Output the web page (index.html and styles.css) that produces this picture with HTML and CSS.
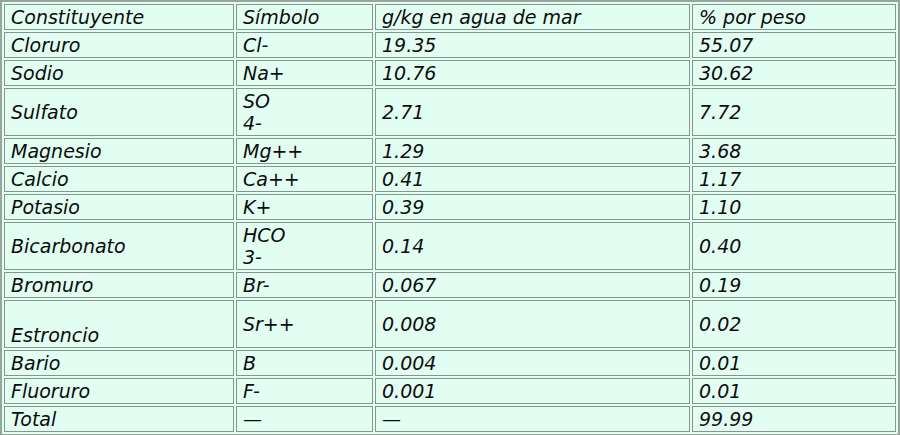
FILE: index.html
```html
<!DOCTYPE html>
<html lang="es">
<head>
<meta charset="utf-8">
<title>Constituyentes del agua de mar</title>
<link rel="stylesheet" href="styles.css">
</head>
<body>
<table class="data">
  <colgroup>
    <col class="c1"><col class="c2"><col class="c3"><col class="c4">
  </colgroup>
  <tr><td>Constituyente</td><td>Símbolo</td><td>g/kg en agua de mar</td><td>% por peso</td></tr>
  <tr><td>Cloruro</td><td>Cl-</td><td>19.35</td><td>55.07</td></tr>
  <tr><td>Sodio</td><td>Na+</td><td>10.76</td><td>30.62</td></tr>
  <tr><td>Sulfato</td><td>SO<br>4-</td><td>2.71</td><td>7.72</td></tr>
  <tr><td>Magnesio</td><td>Mg++</td><td>1.29</td><td>3.68</td></tr>
  <tr><td>Calcio</td><td>Ca++</td><td>0.41</td><td>1.17</td></tr>
  <tr><td>Potasio</td><td>K+</td><td>0.39</td><td>1.10</td></tr>
  <tr><td>Bicarbonato</td><td>HCO<br>3-</td><td>0.14</td><td>0.40</td></tr>
  <tr><td>Bromuro</td><td>Br-</td><td>0.067</td><td>0.19</td></tr>
  <tr><td><br>Estroncio</td><td>Sr++</td><td>0.008</td><td>0.02</td></tr>
  <tr><td>Bario</td><td>B</td><td>0.004</td><td>0.01</td></tr>
  <tr><td>Fluoruro</td><td>F-</td><td>0.001</td><td>0.01</td></tr>
  <tr><td>Total</td><td>—</td><td>—</td><td>99.99</td></tr>
</table>
</body>
</html>
```
FILE: styles.css
```css
html, body {
  margin: 0;
  padding: 0;
  background: #e2fdf1;
}

.data {
  width: 900px;
  table-layout: fixed;
  border-collapse: separate;
  border-spacing: 2px;
  border: 2px solid #96a49d;
  background: #e2fdf1;
  font-family: "DejaVu Sans", Verdana, sans-serif;
  font-style: italic;
  font-size: 19px;
  line-height: 22px;
  color: #0c0c0c;
}

.c1 { width: 230px; }
.c2 { width: 137px; }
.c3 { width: 315px; }
.c4 { width: 204px; }

.data td {
  box-sizing: border-box;
  border: 1px solid #86958e;
  padding: 1px 6px 1px 6px;
  vertical-align: middle;
  text-align: left;
  white-space: nowrap;
  overflow: hidden;
}
```
